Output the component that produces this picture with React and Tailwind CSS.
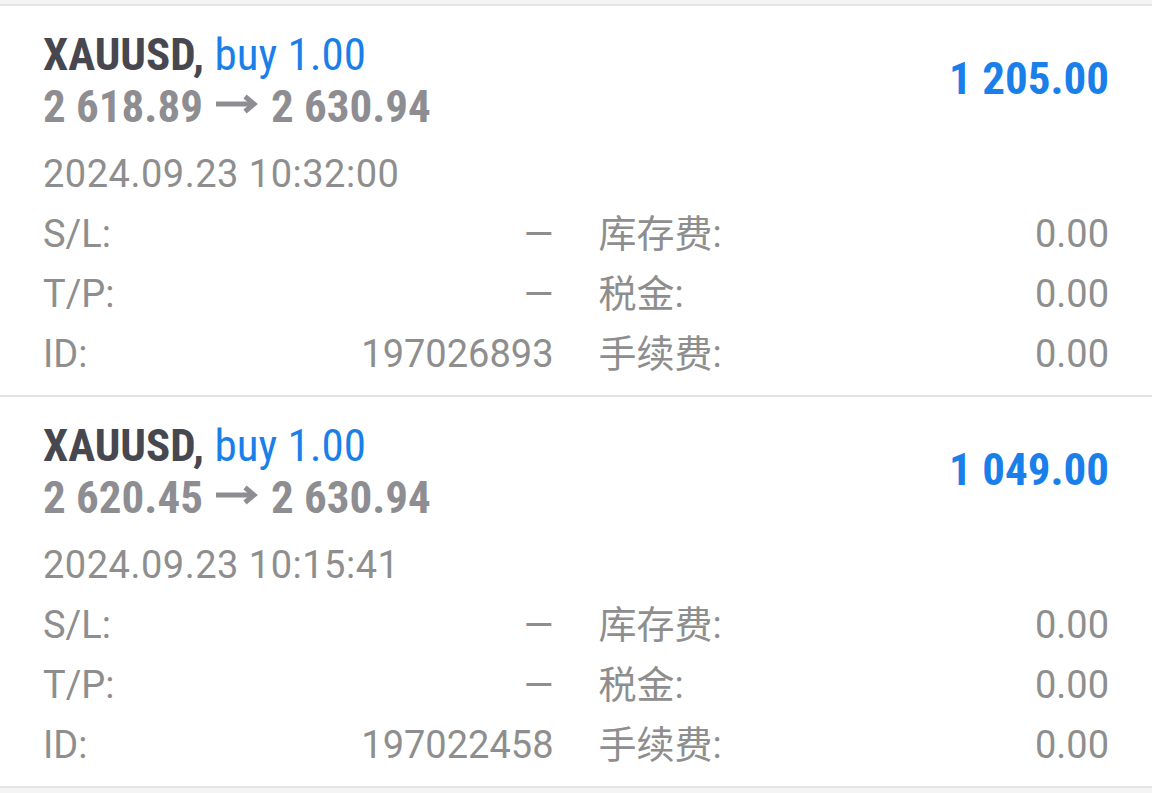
const trades = [
  {
    symbol: "XAUUSD",
    side: "buy 1.00",
    open: "2 618.89",
    close: "2 630.94",
    profit: "1 205.00",
    time: "2024.09.23 10:32:00",
    id: "197026893",
  },
  {
    symbol: "XAUUSD",
    side: "buy 1.00",
    open: "2 620.45",
    close: "2 630.94",
    profit: "1 049.00",
    time: "2024.09.23 10:15:41",
    id: "197022458",
  },
];

function Cell({ label, value }) {
  return (
    <div className="flex justify-between">
      <span>{label}</span>
      <span>{value}</span>
    </div>
  );
}

function Arrow() {
  return (
    <svg
      viewBox="0 0 42 20"
      className="inline-block w-[42px] h-[20px] mx-[13px] align-[8px]"
      fill="none"
      stroke="currentColor"
      strokeWidth="5"
    >
      <path d="M0 10H38" />
      <path d="M29 2.5L38 10L29 17.5" />
    </svg>
  );
}

function TradeCard({ t }) {
  return (
    <div className="bg-white border-b-2 border-[#e3e3e3] px-[43px] pt-[23px] pb-[11px] h-[391px]">
      <div className="flex items-center justify-between font-['Roboto_Condensed',Roboto,sans-serif] font-stretch-condensed text-[45px] leading-[52px]">
        <div>
          <div className="font-bold text-[#47474f]">
            {t.symbol},{" "}
            <span className="font-normal text-[#1b7fe9]">{t.side}</span>
          </div>
          <div className="font-bold text-[#8d8d92]">
            {t.open}
            <Arrow />
            {t.close}
          </div>
        </div>
        <div className="font-bold text-[#1b7fe9] pb-[5px]">{t.profit}</div>
      </div>
      <div className="mt-[11px] font-['Roboto','Noto_Sans_CJK_SC',sans-serif] text-[38px] leading-[60px] text-[#8e8e8e]">
        <div className="tracking-[0.5px]">{t.time}</div>
        <div className="grid grid-cols-2 gap-x-[45px]">
          <Cell label="S/L:" value="—" />
          <Cell label="库存费:" value="0.00" />
          <Cell label="T/P:" value="—" />
          <Cell label="税金:" value="0.00" />
          <Cell label="ID:" value={t.id} />
          <Cell label="手续费:" value="0.00" />
        </div>
      </div>
    </div>
  );
}

export default function App() {
  return (
    <div className="min-h-screen bg-[#f4f4f4] pt-[4px]">
      <div className="border-t-2 border-[#e3e3e3]">
        {trades.map((t) => (
          <TradeCard key={t.id} t={t} />
        ))}
      </div>
    </div>
  );
}
